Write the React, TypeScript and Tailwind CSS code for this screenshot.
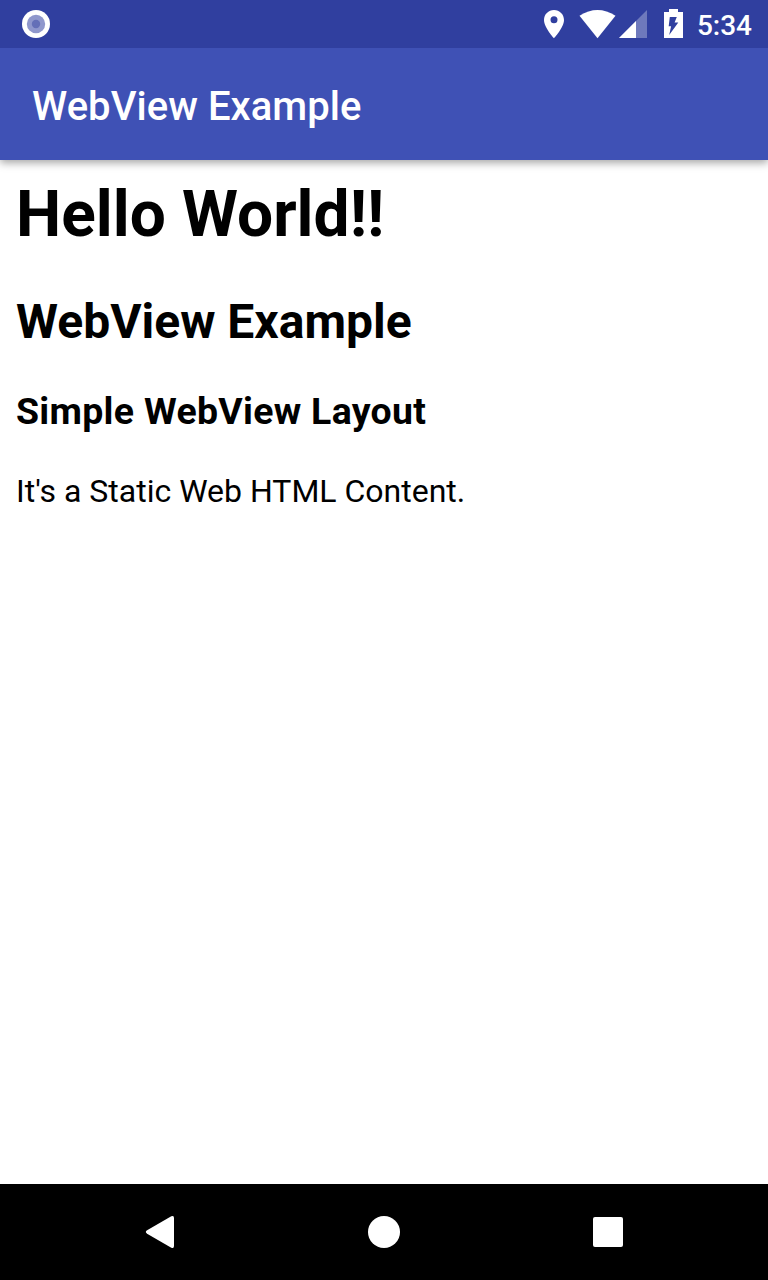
export default function App() {
  return (
    <div className="flex h-[1280px] w-[768px] flex-col overflow-hidden bg-white font-['Roboto',sans-serif] text-black">
      <div className="relative z-20 flex h-12 shrink-0 items-center bg-[#303f9f] text-white">
        <svg className="ml-5 h-8 w-8" viewBox="0 0 32 32">
          <circle cx="16" cy="16" r="14" fill="#fff" />
          <circle cx="16" cy="16" r="9.200" fill="#8f97cc" />
          <circle cx="16" cy="16" r="4.200" fill="#646fb7" />
        </svg>
        <svg className="ml-auto h-12 w-[158px]" viewBox="0 0 158 48" fill="#fff">
          <path fillRule="evenodd" d="M24 10c-5.600 0-10 4.400-10 10 0 7.500 10 18.200 10 18.200s10-10.700 10-18.200c0-5.600-4.400-10-10-10zm0 6.200a3.500 3.500 0 1 1 0 7a3.500 3.500 0 0 1 0-7z" />
          <path d="M49.500 15.700Q67.500 4.300 85.500 15.700L67.500 38.200z" />
          <path d="M117 10v28H89z" opacity=".3" />
          <path d="M106 21v17H89z" />
          <path fillRule="evenodd" d="M139 9h9v3h5v26h-19V12h5zM139.800 17h7l-2.200 5.500h3.700L139.200 35l1.900-8.800h-2.400z" />
        </svg>
        <span className="mr-4 ml-[9px] pt-[3px] text-[28px] leading-8 font-medium">5:34</span>
      </div>
      <header className="relative z-10 flex h-28 shrink-0 items-center bg-[#3f51b5] px-8 pt-1.5 text-white shadow-[0_3px_8px_rgba(0,0,0,.35)]">
        <span className="text-[40px] leading-[48px] font-medium tracking-[0.04px]">WebView Example</span>
      </header>
      <main className="flex-1 px-4 pt-[17px]">
        <h1 className="text-[64px] leading-[75px] font-bold tracking-[0.04px]">Hello World!!</h1>
        <h2 className="mt-[42px] text-[48px] leading-[56px] font-bold">WebView Example</h2>
        <h3 className="mt-[39px] text-[37.440px] leading-[44px] font-bold tracking-[0.3px]">Simple WebView Layout</h3>
        <p className="mt-[39px] text-[32px] leading-[38px]">It's a Static Web HTML Content.</p>
      </main>
      <nav className="flex h-24 shrink-0 items-center justify-between bg-black px-[140px]">
        <svg className="h-10 w-10" viewBox="0 0 40 40" fill="#fff"><path d="M7.100 18.300L31.300 4.300Q34 3 34 6v28q0 3-2.700 1.700L7.100 21.700Q4.500 20 7.100 18.300z" /></svg>
        <svg className="h-10 w-10" viewBox="0 0 40 40" fill="#fff"><circle cx="20" cy="20" r="16" /></svg>
        <svg className="h-10 w-10" viewBox="0 0 40 40" fill="#fff"><rect x="5" y="5" width="30" height="30" rx="2" /></svg>
      </nav>
    </div>
  );
}
